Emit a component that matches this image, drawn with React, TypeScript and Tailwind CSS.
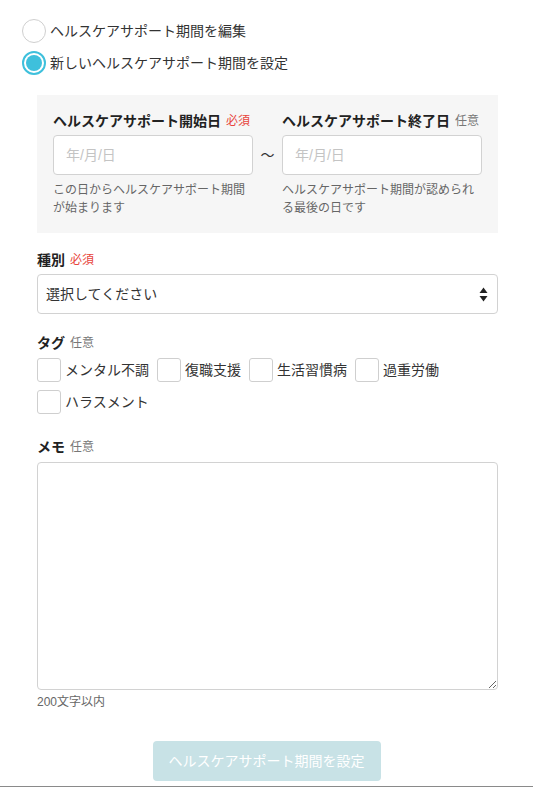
import React from "react";

const FONT = {
  fontFamily: '"Liberation Sans", "Noto Sans CJK JP", sans-serif',
};

function Radio({ checked, label }: { checked: boolean; label: string }) {
  return (
    <label className="flex items-center h-6 cursor-pointer">
      {checked ? (
        <span className="w-6 h-6 rounded-full border-2 border-[#3ec0dc] bg-white p-[2px] box-border flex">
          <span className="flex-1 rounded-full bg-[#3ec0dc]" />
        </span>
      ) : (
        <span className="w-6 h-6 rounded-full border border-[#cfcfcf] bg-white box-border" />
      )}
      <span className="ml-[4px] text-[14px] leading-5 text-[#333]">{label}</span>
    </label>
  );
}

function Required() {
  return <span className="ml-[5px] text-[12px] leading-5 font-normal text-[#e8453c]">必須</span>;
}

function Optional() {
  return <span className="ml-[5px] text-[12px] leading-5 font-normal text-[#777]">任意</span>;
}

function FieldLabel({ text, children }: { text: string; children: React.ReactNode }) {
  return (
    <div className="flex items-center h-5 whitespace-nowrap">
      <span className="text-[14px] leading-5 font-bold text-[#222]">{text}</span>
      {children}
    </div>
  );
}

function Check({ label }: { label: string }) {
  return (
    <label className="flex items-center h-6">
      <span className="w-6 h-6 rounded-[3px] border border-[#cfcfcf] bg-white box-border" />
      <span className="ml-[4px] text-[14px] leading-5 text-[#333]">{label}</span>
    </label>
  );
}

export default function App() {
  const tags = ["メンタル不調", "復職支援", "生活習慣病", "過重労働", "ハラスメント"];
  return (
    <div style={FONT} className="w-[533px] h-[787px] bg-white flex flex-col overflow-hidden">
      <div className="flex-1 flex flex-col">
        {/* mode selection */}
        <div className="pt-[19px] pl-[22px] flex flex-col gap-2">
          <Radio checked={false} label="ヘルスケアサポート期間を編集" />
          <Radio checked={true} label="新しいヘルスケアサポート期間を設定" />
        </div>

        <div className="pl-[37px] pr-[35px]">
          {/* period */}
          <div className="mt-5 bg-[#f6f6f6] pt-4 pb-4 px-4">
            <div className="grid grid-cols-[200px_29px_200px]">
              <FieldLabel text="ヘルスケアサポート開始日">
                <Required />
              </FieldLabel>
              <div />
              <FieldLabel text="ヘルスケアサポート終了日">
                <Optional />
              </FieldLabel>

              <input
                type="text"
                placeholder="年/月/日"
                className="mt-1 h-10 w-[200px] rounded-[4px] border border-[#d2d2d2] bg-white pl-3 text-[14px] text-[#333] placeholder:text-[#c4c4c4] outline-none"
              />
              <div className="mt-1 flex items-center justify-center text-[14px] text-[#333]">〜</div>
              <input
                type="text"
                placeholder="年/月/日"
                className="mt-1 h-10 w-[200px] rounded-[4px] border border-[#d2d2d2] bg-white pl-3 text-[14px] text-[#333] placeholder:text-[#c4c4c4] outline-none"
              />

              <p className="mt-[6px] text-[12px] leading-[18px] text-[#666]">
                この日からヘルスケアサポート期間が始まります
              </p>
              <div />
              <p className="mt-[6px] text-[12px] leading-[18px] text-[#666]">
                ヘルスケアサポート期間が認められる最後の日です
              </p>
            </div>
          </div>

          {/* category */}
          <div className="mt-[17px]">
            <FieldLabel text="種別">
              <Required />
            </FieldLabel>
          </div>
          <div className="mt-1 h-10 rounded-[4px] border border-[#d2d2d2] bg-white flex items-center justify-between pl-2 pr-[9px]">
            <span className="text-[14px] text-[#333]">選択してください</span>
            <svg width="9" height="15" viewBox="0 0 9 15" className="text-[#222]">
              <path d="M4.5 0.5 L8.5 6 L0.5 6 Z" fill="currentColor" />
              <path d="M0.5 9 L8.5 9 L4.5 14.5 Z" fill="currentColor" />
            </svg>
          </div>

          {/* tags */}
          <div className="mt-[19px]">
            <FieldLabel text="タグ">
              <Optional />
            </FieldLabel>
          </div>
          <div className="mt-[5px] flex flex-wrap gap-x-2 gap-y-2">
            {tags.map((t) => (
              <Check key={t} label={t} />
            ))}
          </div>

          {/* memo */}
          <div className="mt-[23px]">
            <FieldLabel text="メモ">
              <Optional />
            </FieldLabel>
          </div>
          <textarea className="mt-[5px] block w-full h-[228px] rounded-[4px] border border-[#d2d2d2] bg-white outline-none resize-y" />
          <p className="mt-[3px] text-[12px] leading-[18px] text-[#666]">200文字以内</p>
        </div>

        {/* submit */}
        <div className="mt-[30px] flex justify-center">
          <button
            type="button"
            disabled
            className="h-10 w-[228px] rounded-[4px] bg-[#c8e2e6] text-[14px] text-white"
          >
            ヘルスケアサポート期間を設定
          </button>
        </div>
      </div>
      <div className="h-px bg-[#8a8a8a]" />
    </div>
  );
}
